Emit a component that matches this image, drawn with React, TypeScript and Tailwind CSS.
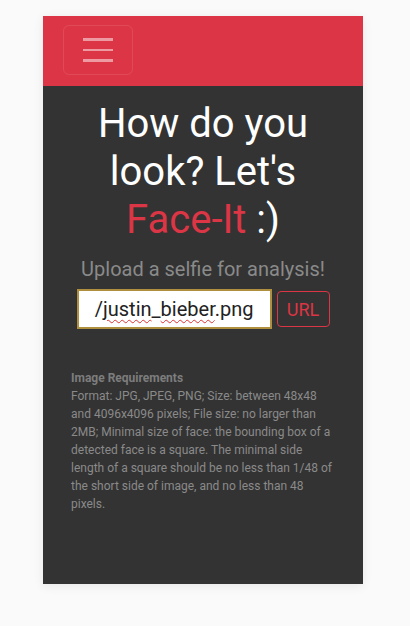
export default function App() {
  const font = { fontFamily: "Roboto, 'Liberation Sans', sans-serif" };
  return (
    <div className="min-h-[626px] bg-[#fafafa] pt-[16px]" style={font}>
      <div className="ml-[43px] flex h-[568px] w-[320px] flex-col bg-[#333333] shadow-[0_2px_10px_rgba(0,0,0,0.08)]">
        {/* Navbar */}
        <div className="flex h-[70px] items-start bg-[#dc3545] pl-[20px] pt-[9px]">
          <button className="flex h-[50px] w-[70px] flex-col items-center justify-center gap-[8px] rounded-[6px] border border-white/10">
            <span className="block h-[2.5px] w-[30px] bg-white/50" />
            <span className="block h-[2.5px] w-[30px] bg-white/50" />
            <span className="block h-[2.5px] w-[30px] bg-white/50" />
          </button>
        </div>

        {/* Hero */}
        <div className="flex flex-col items-center pt-[14px]">
          <h1 className="w-[240px] text-center text-[40px] font-normal leading-[1.2] text-white">
            How do you look? Let's <span className="text-[#dc3545]">Face-It</span> :)
          </h1>
          <p className="mt-[10px] text-[20px] leading-[30px] text-[#8a8a8a]">Upload a selfie for analysis!</p>

          <div className="mt-[5px] flex items-start gap-[5px]">
            <div className="flex h-[40px] w-[195px] items-center border-2 border-[#b0903f] bg-white pl-[15px] pr-[16px]">
              <div className="flex w-full justify-end overflow-hidden">
                <span className="whitespace-nowrap text-[20px] text-[#222]">
                  faceit/img/
                  <span className="underline decoration-[#d33] decoration-wavy decoration-1 underline-offset-[3px]">justin</span>_
                  <span className="underline decoration-[#d33] decoration-wavy decoration-1 underline-offset-[3px]">bieber</span>.png
                </span>
              </div>
            </div>
            <button className="mt-[2px] flex h-[36px] w-[53px] items-center justify-center rounded-[4px] border border-[#dc3545] text-[18px] text-[#dc3545]">
              URL
            </button>
          </div>
        </div>

        {/* Requirements */}
        <div className="mt-[40px] px-[28px] text-[12px] leading-[18px] text-[#8a8a8a]">
          <div className="font-bold text-[#7d7d7d]">Image Requirements</div>
          <p>
            Format: JPG, JPEG, PNG; Size: between 48x48 and 4096x4096 pixels; File size: no larger than 2MB; Minimal size of face: the bounding box of a detected face is a square. The minimal side length of a square should be no less than 1/48 of the short side of image, and no less than 48 pixels.
          </p>
        </div>
      </div>
    </div>
  );
}
